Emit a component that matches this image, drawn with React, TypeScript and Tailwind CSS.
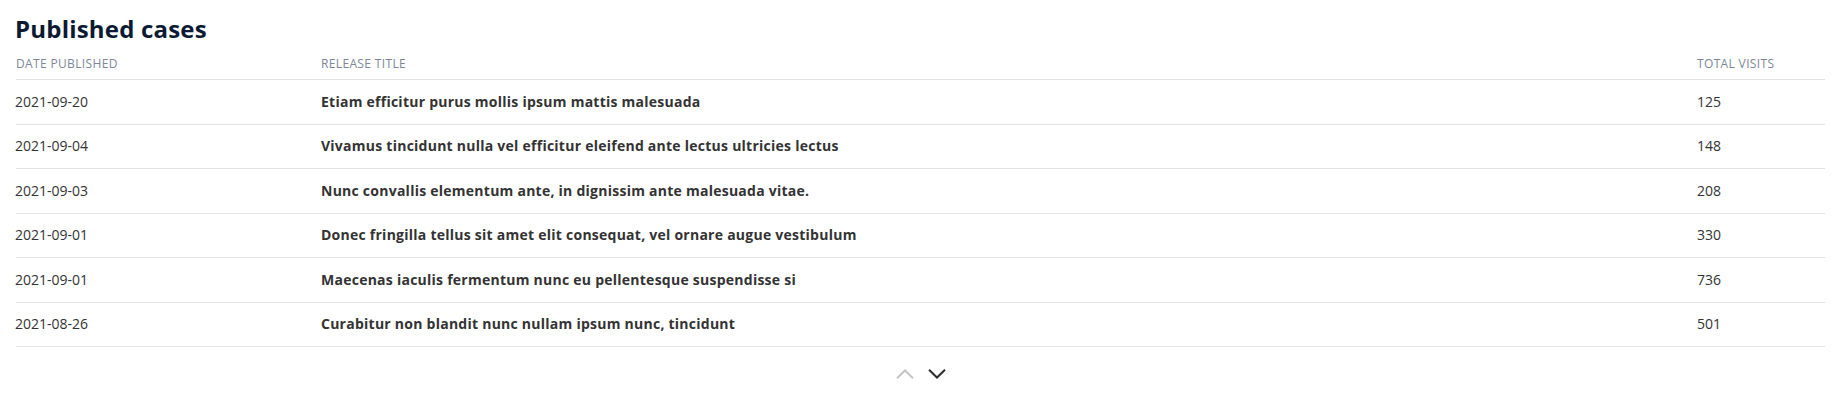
import React from "react";

const rows = [
  { date: "2021-09-20", title: "Etiam efficitur purus mollis ipsum mattis malesuada", visits: "125" },
  { date: "2021-09-04", title: "Vivamus tincidunt nulla vel efficitur eleifend ante lectus ultricies lectus", visits: "148" },
  { date: "2021-09-03", title: "Nunc convallis elementum ante, in dignissim ante malesuada vitae.", visits: "208" },
  { date: "2021-09-01", title: "Donec fringilla tellus sit amet elit consequat, vel ornare augue vestibulum", visits: "330" },
  { date: "2021-09-01", title: "Maecenas iaculis fermentum nunc eu pellentesque suspendisse si", visits: "736" },
  { date: "2021-08-26", title: "Curabitur non blandit nunc nullam ipsum nunc, tincidunt", visits: "501" },
];

export default function App() {
  return (
    <div className="bg-white w-full h-[405px] px-4 font-['Open_Sans',sans-serif]">
      <h2 className="pt-[13px] text-[24px] leading-8 font-bold text-[#0b1a33] tracking-[0.2px] -ml-px">Published cases</h2>
      <div className="grid grid-cols-[305px_1fr_128px] h-[35px] items-end pb-[7px] border-b border-[#e2e2e2] text-[12px] leading-4 uppercase text-[#7d8799] tracking-[0.35px]">
        <div>Date published</div>
        <div>Release title</div>
        <div>Total visits</div>
      </div>
      {rows.map((r, i) => (
        <div
          key={i}
          className="grid grid-cols-[305px_1fr_128px] h-[44.5px] items-center border-b border-[#e2e2e2] text-[14px] leading-5 text-[#333333]"
        >
          <div className="-ml-px">{r.date}</div>
          <div className="font-bold tracking-[0.25px]">{r.title}</div>
          <div>{r.visits}</div>
        </div>
      ))}
      <div className="flex justify-center gap-2 mt-[15px]">
        <button className="w-6 h-6 flex items-center justify-center" aria-label="Previous">
          <svg width="18" height="10" viewBox="0 0 18 10" fill="none">
            <polyline points="1,9.2 9,1.5 17,9.2" stroke="#c6c6c6" strokeWidth="2" />
          </svg>
        </button>
        <button className="w-6 h-6 flex items-center justify-center" aria-label="Next">
          <svg width="18" height="10" viewBox="0 0 18 10" fill="none">
            <polyline points="1,0.8 9,8.5 17,0.8" stroke="#2b2b2b" strokeWidth="2" />
          </svg>
        </button>
      </div>
    </div>
  );
}
